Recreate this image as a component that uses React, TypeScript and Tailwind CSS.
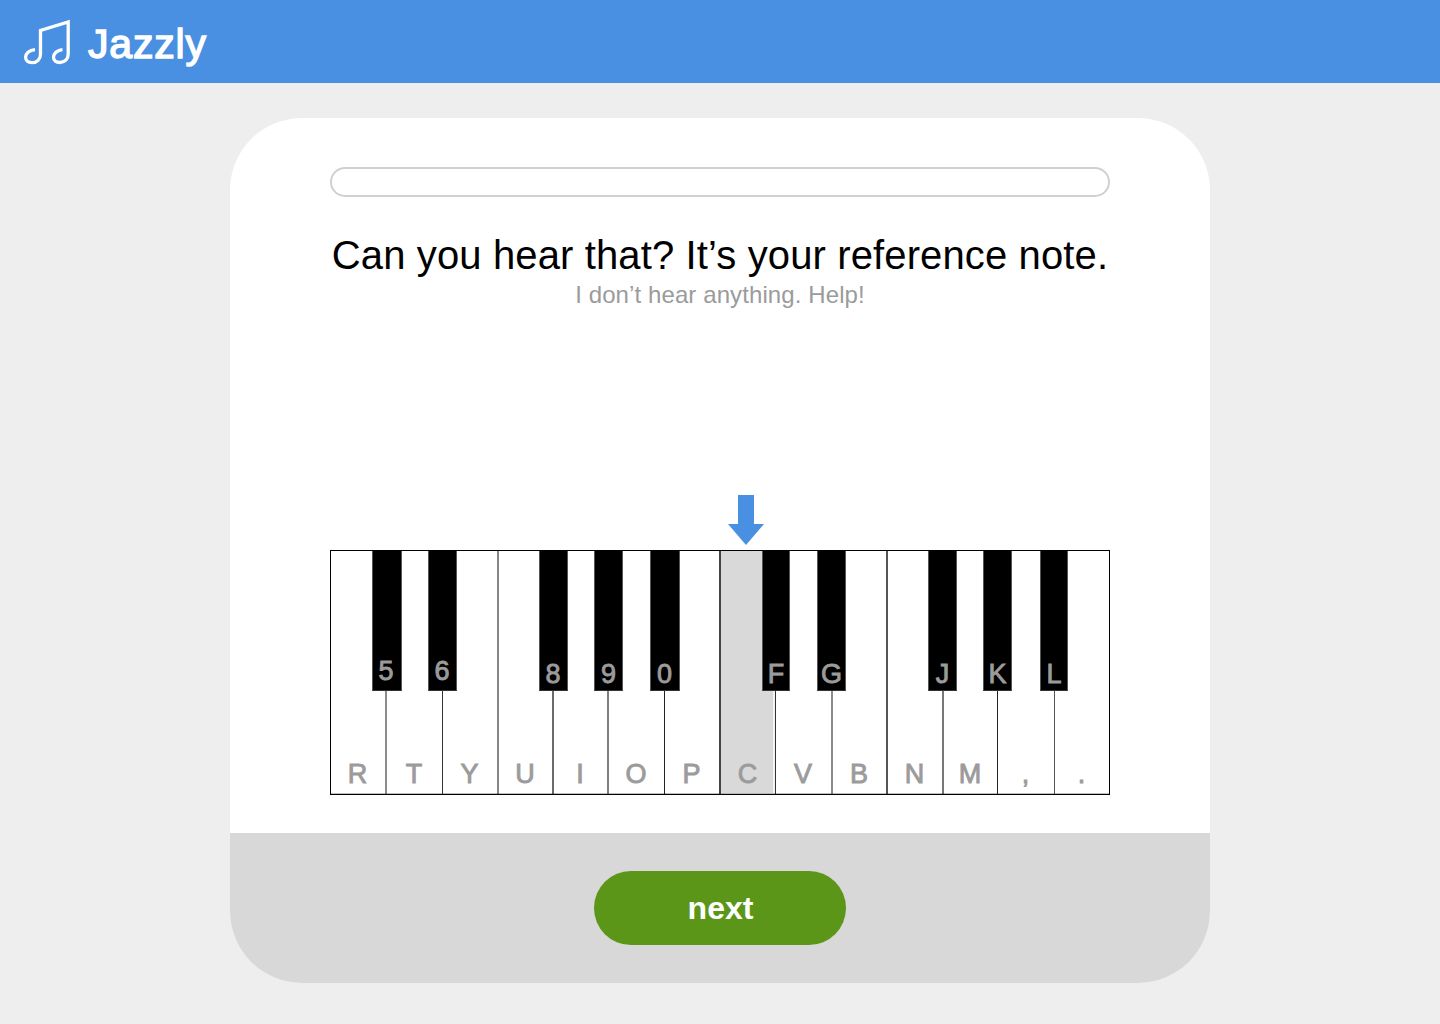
const whites = [
  { k: 'R', c: 'w-[56px] border-r-2 border-[#8c8c8c] bg-white' },
  { k: 'T', c: 'w-[56px] border-r border-[#333] bg-white' },
  { k: 'Y', c: 'w-[56px] border-r-2 border-[#858585] bg-white' },
  { k: 'U', c: 'w-[55px] border-r-2 border-[#6b6b6b] bg-white' },
  { k: 'I', c: 'w-[55px] border-r-2 border-[#808080] bg-white' },
  { k: 'O', c: 'w-[56px] border-r border-[#222] bg-white' },
  { k: 'P', c: 'w-[56px] border-r-2 border-[#444] bg-white' },
  { k: 'C', c: 'w-[55px] border-r border-[#333] bg-[#d9d9d9] shadow-[inset_-2px_-1px_0_#f4f4f4]' },
  { k: 'V', c: 'w-[57px] border-r-2 border-[#8c8c8c] bg-white' },
  { k: 'B', c: 'w-[55px] border-r-2 border-[#555] bg-white' },
  { k: 'N', c: 'w-[56px] border-r-2 border-[#777] bg-white' },
  { k: 'M', c: 'w-[54px] border-r border-[#222] bg-white' },
  { k: ',', c: 'w-[57px] border-r border-[#555] bg-white' },
  { k: '.', c: 'w-[54px] bg-white' },
];

const blacks = [
  { k: '5', p: 'left-[41px] w-[30px] pb-[3px] pr-[2px]' },
  { k: '6', p: 'left-[97px] w-[29px] pb-[3px] pr-px' },
  { k: '8', p: 'left-[208px] w-[29px] pr-px' },
  { k: '9', p: 'left-[263px] w-[29px]' },
  { k: '0', p: 'left-[319px] w-[30px] pr-px' },
  { k: 'F', p: 'left-[431px] w-[28px]' },
  { k: 'G', p: 'left-[486px] w-[29px]' },
  { k: 'J', p: 'left-[597px] w-[29px]' },
  { k: 'K', p: 'left-[652px] w-[29px]' },
  { k: 'L', p: 'left-[709px] w-[28px]' },
];

function MusicLogo() {
  return (
    <svg className="h-[46px] w-[48px]" viewBox="0 0 48 46" fill="none" stroke="#fff" strokeWidth="3.3">
      <path d="M12 30.6C6 31 2.6 34.8 2.6 38.3c0 3.4 2.7 5.4 6.4 5.4 5 0 8.500-3.600 8.500-8.500V11.400L45.200 3v32.200c0 4.900-3.500 8.300-8.300 8.300-3.600 0-6.400-1.900-6.400-5.200 0-3.700 3.500-7.400 9-7.700" />
    </svg>
  );
}

function Piano() {
  return (
    <div className="relative flex h-[245px] w-[780px] border border-black">
      {whites.map(({ k, c }) => (
        <div
          key={k}
          className={`flex shrink-0 items-end justify-center border-solid pb-[4px] pr-px text-[27px] leading-8 text-[#9b9b9b] [-webkit-text-stroke:0.9px_#9b9b9b] ${c}`}
        >
          {k}
        </div>
      ))}
      <div className="absolute inset-x-0 bottom-0 h-px bg-black/25" />
      {blacks.map(({ k, p }) => (
        <div
          key={k}
          className={`absolute top-0 flex h-[140px] items-end justify-center border-x border-b border-x-[#555] border-b-[#333] bg-black text-[27px] leading-8 text-[#9b9b9b] [-webkit-text-stroke:0.9px_#9b9b9b] ${p}`}
        >
          {k}
        </div>
      ))}
    </div>
  );
}

export default function App() {
  return (
    <div className="flex h-screen flex-col items-center overflow-hidden bg-[#eee] font-['Liberation_Sans',Arial,sans-serif]">
      <header className="flex h-[83px] w-full shrink-0 items-center bg-[#4a90e2] pl-[23px] text-white">
        <MusicLogo />
        <span className="ml-[17px] mt-[6px] text-[41px] leading-none tracking-[0.8px] [-webkit-text-stroke:1.4px_#fff]">Jazzly</span>
      </header>
      <main className="mt-[35px] flex h-[865px] w-[980px] shrink-0 flex-col items-center overflow-hidden rounded-[72px] bg-white">
        <div className="mt-[49px] h-[30px] w-[780px] shrink-0 rounded-full border-2 border-[#d0d0d0]" />
        <h1 className="mt-[35px] h-[46px] whitespace-nowrap text-[40px] leading-[46px] tracking-[0.125px] text-black">
          Can you hear that? It’s your reference note.
        </h1>
        <p className="mt-[3px] h-[28px] whitespace-nowrap text-[24px] leading-[28px] tracking-[0.1px] text-[#9b9b9b]">
          I don’t hear anything. Help!
        </p>
        <div className="mt-[186px] h-[55px] w-[780px] pl-[398px]">
          <svg className="h-[50px] w-[36px]" viewBox="0 0 36 50" fill="#4a90e2">
            <path d="M10 0h16v29h10L18 50 0 29h10z" />
          </svg>
        </div>
        <Piano />
        <footer className="mt-[38px] flex h-[150px] w-full shrink-0 items-center justify-center bg-[#d8d8d8]">
          <button className="h-[74px] w-[252px] rounded-full bg-[#5b9619] pl-px text-[32px] font-bold text-white">next</button>
        </footer>
      </main>
    </div>
  );
}
